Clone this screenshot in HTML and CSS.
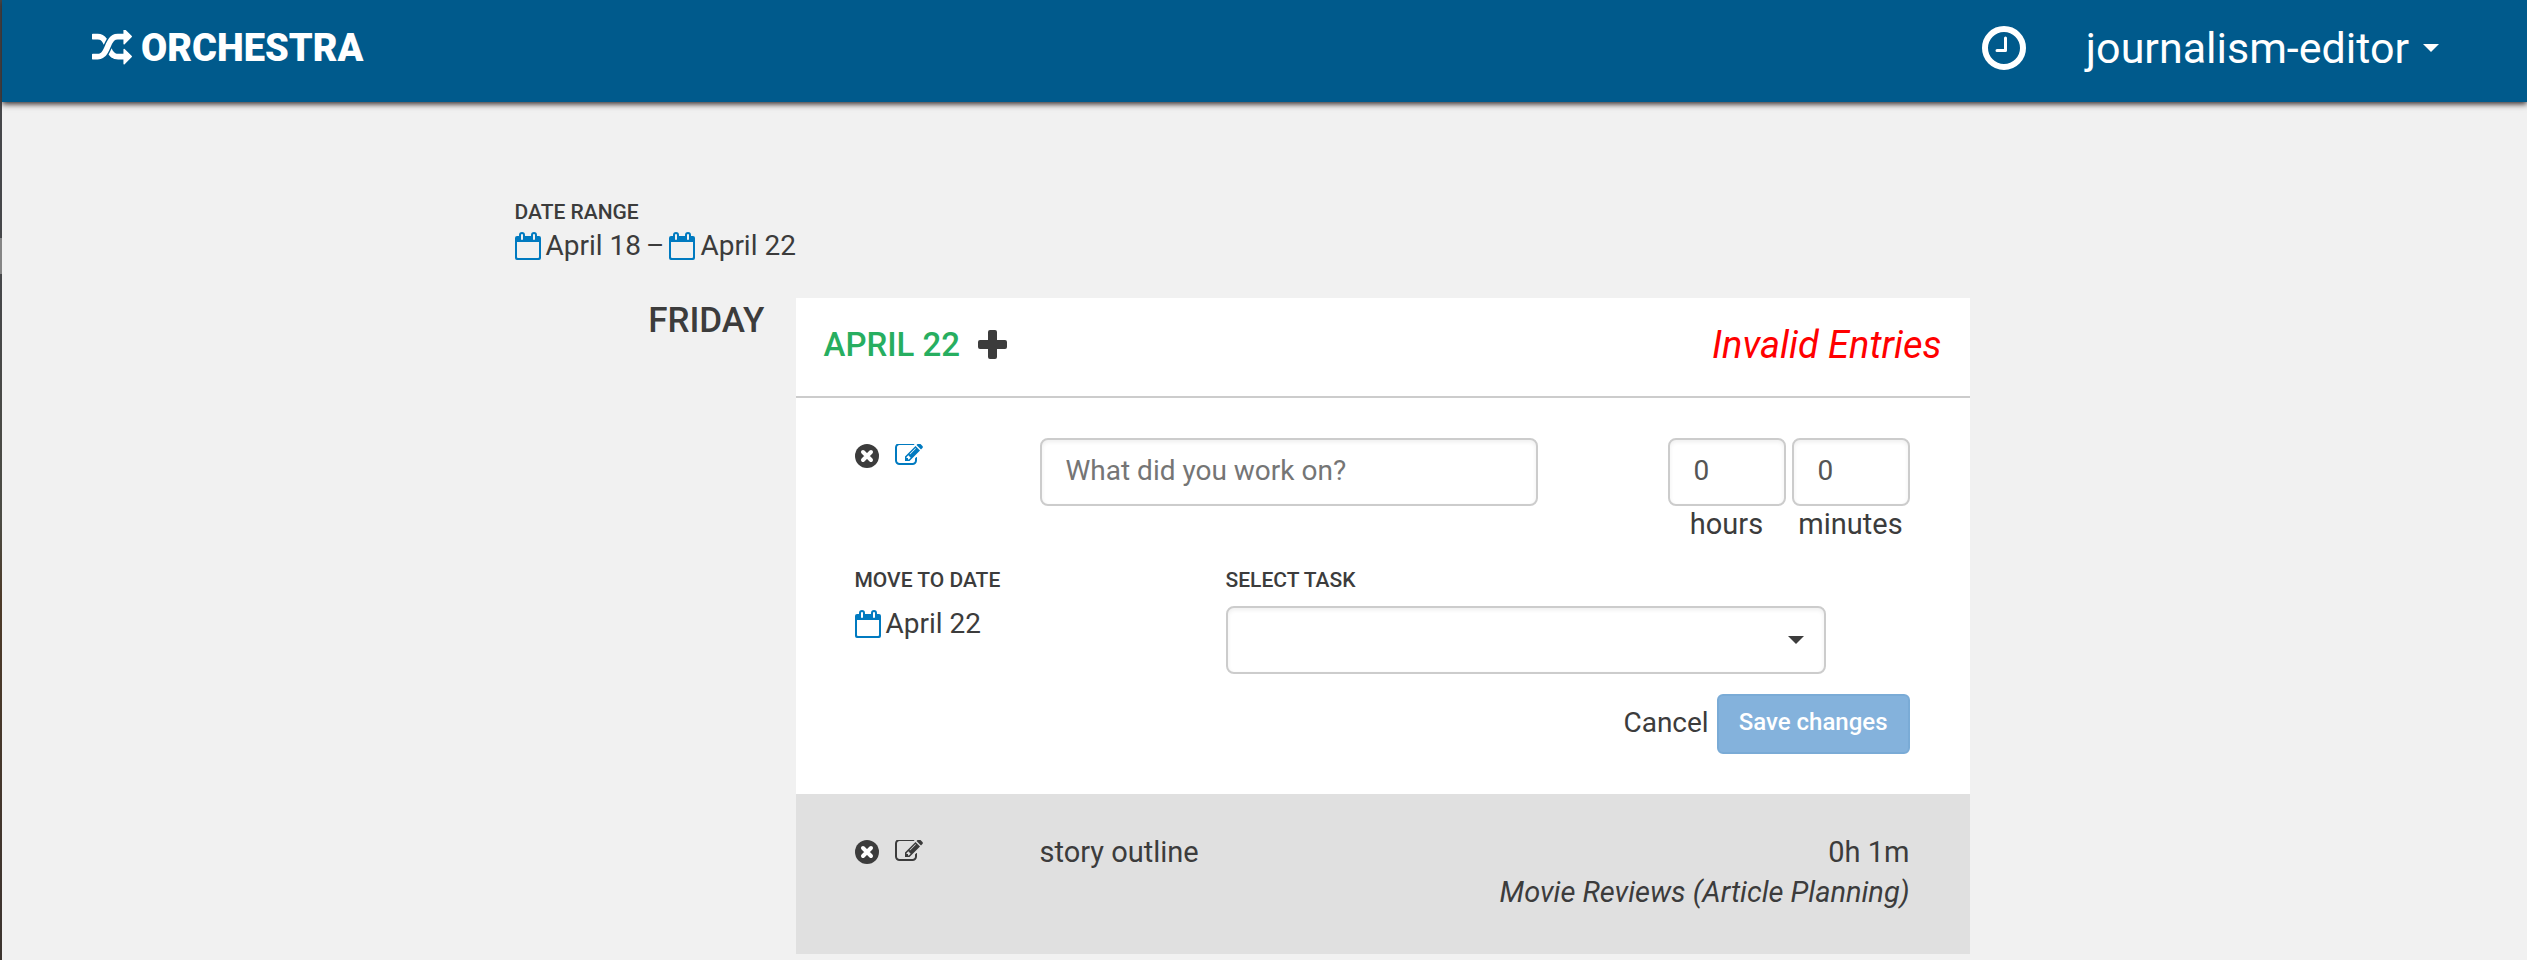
FILE: index.html
```html
<!DOCTYPE html>
<html lang="en">
<head>
<meta charset="utf-8">
<title>Orchestra</title>
<link rel="stylesheet" href="styles.css">
</head>
<body>
<svg class="sprite" aria-hidden="true">
  <symbol id="calendar" viewBox="0 0 26 28">
    <path fill="currentColor" fill-rule="evenodd" d="M2 4h2V3a3 3 0 0 1 6 0v1h6V3a3 3 0 0 1 6 0v1h2a2 2 0 0 1 2 2v20a2 2 0 0 1-2 2H2a2 2 0 0 1-2-2V6a2 2 0 0 1 2-2zM2 10v15q0 1 1 1h20q1 0 1-1V10zM6 3v4a1 1 0 0 0 2 0V3a1 1 0 0 0-2 0zM18 3v4a1 1 0 0 0 2 0V3a1 1 0 0 0-2 0z"/>
  </symbol>
  <symbol id="remove" viewBox="0 0 24 24">
    <circle cx="12" cy="12" r="12" fill="currentColor"/>
    <path class="cut" d="M8 8l8 8M16 8l-8 8"/>
  </symbol>
  <symbol id="edit" viewBox="0 0 1792 1408">
    <path fill="currentColor" d="M888 992l116-116-152-152-116 116v56h96v96h56zm440-720q-16-16-33 1l-350 350q-17 17-1 33t33-1l350-350q17-17 1-33zm80 594v190q0 119-84.500 203.500t-203.500 84.500h-832q-119 0-203.500-84.500t-84.500-203.500v-832q0-119 84.500-203.500t203.500-84.500h832q63 0 117 25 15 7 18 23 3 17-9 29l-49 49q-14 14-32 8-23-6-45-6h-832q-66 0-113 47t-47 113v832q0 66 47 113t113 47h832q66 0 113-47t47-113v-126q0-13 9-22l64-64q15-15 35-7t20 29zm-96-738l288 288-672 672h-288v-288zm444 132l-92 92-288-288 92-92q28-28 68-28t68 28l152 152q28 28 28 68t-28 68z"/>
  </symbol>
</svg>
<div class="app">
  <div class="edge"></div>
  <div class="page">
    <header class="topbar">
      <a class="brand" href="#">
        <svg class="brand-icon" viewBox="0 160 1792 1472" aria-hidden="true"><path fill="currentColor" d="M666 481q-60 92-137 273-22-45-37-72.500t-40.500-63.500-51-56.500-63-35-81.500-14.500h-224q-14 0-23-9t-9-23v-192q0-14 9-23t23-9h224q250 0 410 225zm1126 799q0 14-9 23l-320 320q-9 9-23 9-13 0-22.500-9.500t-9.500-22.500v-192q-32 0-85 .5t-81 1-73-1-71-5-64-10.500-63-18.500-58-28.500-59-40-55-53.500-56-69.500q59-93 136-273 22 45 37 72.500t40.500 63.500 51 56.500 63 35 81.500 14.500h256v-192q0-14 9-23t23-9q12 0 24 10l319 319q9 9 9 23zm0-896q0 14-9 23l-320 320q-9 9-23 9-13 0-22.500-9.500t-9.500-22.500v-192h-256q-48 0-87 15t-69 45-51 61.500-45 77.500q-32 62-78 171-29 66-49.500 111t-54 105-64 100-74 83-90 68.500-106.500 42-128 16.500h-224q-14 0-23-9t-9-23v-192q0-14 9-23t23-9h224q48 0 87-15t69-45 51-61.500 45-77.500q32-62 78-171 29-66 49.500-111t54-105 64-100 74-83 90-68.500 106.500-42 128-16.500h256v-192q0-14 9-23t23-9q12 0 24 10l319 319q9 9 9 23z"/></svg>
        ORCHESTRA
      </a>
      <nav class="nav">
        <a class="clock" href="#" aria-label="Time tracking">
          <svg viewBox="0 0 44 44" aria-hidden="true"><circle cx="22" cy="22" r="19" fill="none" stroke="currentColor" stroke-width="6"/><path d="M23.500 12v12.500H15" fill="none" stroke="currentColor" stroke-width="3" stroke-linecap="round" stroke-linejoin="round"/></svg>
        </a>
        <button class="user" type="button">journalism-editor <span class="caret"></span></button>
      </nav>
    </header>
    <main class="content">
      <section class="range">
        <h2 class="label">DATE RANGE</h2>
        <div class="range-dates">
          <button class="date" type="button"><svg class="cal"><use href="#calendar"/></svg>April 18</button>
          <span>–</span>
          <button class="date" type="button"><svg class="cal"><use href="#calendar"/></svg>April 22</button>
        </div>
      </section>
      <section class="day">
        <h2 class="weekday">FRIDAY</h2>
        <div class="panel">
          <div class="panel-head">
            <h3 class="panel-date">APRIL 22</h3>
            <button class="add" type="button" aria-label="Add entry"><svg viewBox="0 0 29 29" aria-hidden="true"><path d="M12 0h5q2 0 2 2v8h8q2 0 2 2v5q0 2-2 2h-8v8q0 2-2 2h-5q-2 0-2-2v-8H2q-2 0-2-2v-5q0-2 2-2h8V2q0-2 2-2z" fill="currentColor"/></svg></button>
            <span class="invalid">Invalid Entries</span>
          </div>
          <form class="entry">
            <div class="entry-row">
              <div class="actions">
                <button type="button" aria-label="Remove entry"><svg class="remove"><use href="#remove"/></svg></button>
                <button class="active" type="button" aria-label="Edit entry"><svg class="edit"><use href="#edit"/></svg></button>
              </div>
              <input class="field description" type="text" placeholder="What did you work on?" aria-label="Description">
              <div class="duration">
                <div class="unit"><input class="field" id="hours" type="text" value="0"><label for="hours">hours</label></div>
                <div class="unit"><input class="field" id="minutes" type="text" value="0"><label for="minutes">minutes</label></div>
              </div>
            </div>
            <div class="detail-row">
              <div class="move">
                <h4 class="label">MOVE TO DATE</h4>
                <button class="date" type="button"><svg class="cal"><use href="#calendar"/></svg>April 22</button>
              </div>
              <div class="task">
                <label class="label" for="task">SELECT TASK</label>
                <div class="select">
                  <select class="field" id="task"><option></option></select>
                  <span class="caret"></span>
                </div>
              </div>
            </div>
            <div class="buttons">
              <button class="cancel" type="button">Cancel</button>
              <button class="save" type="submit" disabled>Save changes</button>
            </div>
          </form>
          <div class="entry logged">
            <div class="actions">
              <button type="button" aria-label="Remove entry"><svg class="remove"><use href="#remove"/></svg></button>
              <button type="button" aria-label="Edit entry"><svg class="edit"><use href="#edit"/></svg></button>
            </div>
            <div>story outline</div>
            <div class="summary">
              <div>0h 1m</div>
              <div class="project">Movie Reviews (Article Planning)</div>
            </div>
          </div>
        </div>
      </section>
    </main>
  </div>
</div>
</body>
</html>
```
FILE: styles.css
```css
* {
  box-sizing: border-box;
}

body {
  margin: 0;
  background: #f1f1f1;
  color: #3c3c3c;
  font: 28px/40px Roboto, "Liberation Sans", sans-serif;
}

h2, h3, h4 {
  margin: 0;
}

button {
  padding: 0;
  border: 0;
  background: none;
  color: inherit;
  font: inherit;
}

svg {
  display: block;
}

.sprite {
  display: none;
}

.app {
  display: flex;
  min-height: 100vh;
}

.edge {
  flex: none;
  width: 2px;
  background: linear-gradient(#46474a 238px, #858585 238px, #858585 274px, #46474a 274px, #4c4c44 520px, #4d3a28 600px, #3c3430 960px);
}

.page {
  flex: 1;
  min-width: 0;
}

.topbar {
  display: flex;
  align-items: center;
  justify-content: space-between;
  height: 102px;
  padding: 0 88px 6px 90px;
  background: #005a8c;
  color: #fff;
  box-shadow: 0 2px 6px #2c2424;
}

.brand {
  display: flex;
  align-items: center;
  gap: 9px;
  color: inherit;
  font-size: 38px;
  font-weight: 900;
  text-decoration: none;
}

.brand-icon {
  width: 40px;
  height: 36px;
}

.nav {
  display: flex;
  align-items: center;
  gap: 60px;
}

.clock {
  color: inherit;
}

.clock svg {
  width: 44px;
  height: 44px;
}

.user {
  display: flex;
  align-items: center;
  gap: 14px;
  font-size: 43px;
}

.caret {
  border: 8px solid transparent;
  border-top-color: currentColor;
  border-bottom: 0;
}

.content {
  max-width: 1500px;
  margin: 0 auto;
  padding-top: 90px;
}

.label {
  display: block;
  font-size: 21px;
  font-weight: 500;
  line-height: 40px;
}

.range-dates {
  display: flex;
  gap: 5px;
  line-height: 28px;
}

.date {
  display: flex;
  align-items: center;
  gap: 5px;
  line-height: 28px;
}

.cal {
  width: 26px;
  height: 28px;
  color: #007ac0;
}

.day {
  display: grid;
  grid-template-columns: 250px 1fr;
  gap: 31px;
  padding-right: 45px;
  margin-top: 38px;
}

.weekday {
  padding-top: 3px;
  font-size: 35px;
  font-weight: 500;
  text-align: right;
}

.panel {
  background: #fff;
}

.panel-head {
  display: flex;
  align-items: center;
  height: 100px;
  padding: 0 28px 4px;
  border-bottom: 2px solid #ccc;
}

.panel-date {
  color: #27ae60;
  font-size: 33px;
  font-weight: 500;
}

.add {
  margin-left: 18px;
  padding-bottom: 2px;
}

.add svg {
  width: 29px;
  height: 29px;
}

.invalid {
  margin-left: auto;
  color: #f00;
  font-size: 38px;
  font-style: italic;
}

.entry {
  padding: 40px 60px 40px 59px;
}

.entry-row {
  display: grid;
  grid-template-columns: 185px 498px 1fr;
  align-items: start;
}

.actions {
  display: flex;
  align-items: flex-start;
  gap: 16px;
  padding-top: 6px;
}

.active {
  color: #007ac0;
}

.remove {
  width: 24px;
  height: 24px;
}

.cut {
  fill: none;
  stroke: #fff;
  stroke-width: 4;
  stroke-linecap: round;
}

.edit {
  width: 28px;
  height: 22px;
}

.field {
  width: 100%;
  height: 68px;
  padding: 0 24px 4px;
  border: 2px solid #ccc;
  border-radius: 8px;
  background: #fff;
  box-shadow: inset 0 2px 4px #0001;
  color: #555;
  font: inherit;
}

.field::placeholder {
  color: #757575;
}

.duration {
  display: flex;
  justify-content: flex-end;
  gap: 6px;
}

.unit {
  width: 118px;
}

.unit label {
  display: block;
  font-size: 29px;
  line-height: 36px;
  text-align: center;
}

.detail-row {
  display: grid;
  grid-template-columns: 371px 600px;
  padding-top: 18px;
}

.move .date {
  margin-top: 10px;
}

.task .label {
  margin-bottom: 6px;
}

.select {
  position: relative;
}

.select .field {
  display: block;
  appearance: none;
}

.select .caret {
  position: absolute;
  top: 30px;
  right: 22px;
  pointer-events: none;
}

.buttons {
  display: flex;
  align-items: center;
  justify-content: flex-end;
  gap: 8px;
  padding-top: 20px;
}

.cancel {
  padding-bottom: 2px;
}

.save {
  height: 60px;
  padding: 0 20px 4px;
  border: 2px solid #7aabd6;
  border-radius: 6px;
  background: #84b2dc;
  color: #fff;
  font-size: 24px;
  font-weight: 500;
}

.logged {
  display: grid;
  grid-template-columns: 185px 1fr auto;
  padding-top: 38px;
  padding-bottom: 42px;
  background: #e0e0e0;
  font-size: 29px;
}

.logged .actions {
  padding-top: 8px;
}

.logged .cut {
  stroke: #e0e0e0;
}

.summary {
  text-align: right;
}

.project {
  font-style: italic;
}
```
